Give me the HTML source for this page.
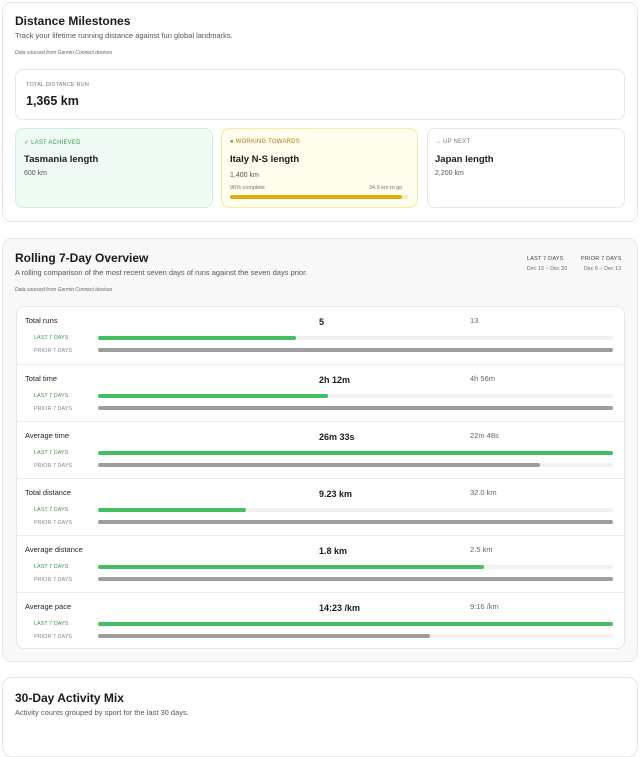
<!DOCTYPE html>
<html><head><meta charset="utf-8"><style>
*{margin:0;padding:0;box-sizing:border-box}
body{width:640px;height:725px;background:#fff;font-family:"Liberation Sans",sans-serif;color:#1a1a1a;position:relative;overflow:hidden}
.a{position:absolute}
.card{position:absolute;border:1px solid #e6e6e6;border-radius:10px}
h2{position:absolute;font-size:12px;font-weight:bold;color:#1a1a1a}
.sub{position:absolute;font-size:7.5px;color:#555}
.src{position:absolute;font-size:5px;font-style:italic;color:#666}
.lab{position:absolute;font-size:5.5px;letter-spacing:.2px;color:#777}
.row{position:absolute;left:16px;width:608px;height:57px;border-top:1px solid #ececec}
.nm{position:absolute;left:9px;top:9px;font-size:7.5px;color:#222}
.v1{position:absolute;left:303px;top:10px;font-size:9px;font-weight:bold}
.v2{position:absolute;left:454px;top:9px;font-size:7.5px;color:#666}
.l1{position:absolute;left:18px;top:28px;font-size:5.5px;color:#3a9a50}
.l2{position:absolute;left:18px;top:41px;font-size:5.5px;color:#888}
.tr{position:absolute;left:82px;width:515px;height:4px;background:#f1f1f1;border-radius:2px}
.g{height:4px;background:#45bd63;border-radius:2px}
.p{height:4px;background:#9e9e9e;border-radius:2px}
</style></head><body>
<div class="card" style="left:2px;top:2px;width:636px;height:220px;background:#fff"></div>
<h2 style="left:15px;top:14px">Distance Milestones</h2>
<div class="sub" style="left:15px;top:31px">Track your lifetime running distance against fun global landmarks.</div>
<div class="src" style="left:15px;top:50px">Data sourced from Garmin Connect devices</div>
<div class="card" style="left:15px;top:69px;width:610px;height:51px;background:#fff;border-radius:8px"></div>
<div class="lab" style="left:26px;top:82px">TOTAL DISTANCE RUN</div>
<div class="a" style="left:26px;top:94px;font-size:12.5px;font-weight:bold">1,365 km</div>
<div class="card" style="left:15px;top:128px;width:198px;height:80px;background:#f1fbf6;border-color:#cdeedd;border-radius:8px"></div>
<div class="lab" style="left:24px;top:139px;color:#3a9a50;font-size:6px">✓ LAST ACHIEVED</div>
<div class="a" style="left:24px;top:154px;font-size:9.5px;font-weight:bold">Tasmania length</div>
<div class="a" style="left:24px;top:170px;font-size:7px;color:#555">600 km</div>
<div class="card" style="left:221px;top:128px;width:197px;height:80px;background:#fffdeb;border-color:#f0e9a8;border-radius:8px"></div>
<div class="lab" style="left:230px;top:139px;color:#a7781a;font-size:6px">● WORKING TOWARDS</div>
<div class="a" style="left:230px;top:154px;font-size:9.5px;font-weight:bold">Italy N-S length</div>
<div class="a" style="left:230px;top:172px;font-size:7px;color:#555">1,400 km</div>
<div class="a" style="left:230px;top:185px;font-size:5.5px;color:#777">96% complete</div>
<div class="a" style="left:369px;top:185px;font-size:5.5px;color:#777">34.9 km to go</div>
<div class="a" style="left:230px;top:195px;width:178px;height:4px;background:#f2edc8;border-radius:2px"><div style="width:172px;height:4px;background:#e0ad0f;border-radius:2px"></div></div>
<div class="card" style="left:427px;top:128px;width:198px;height:80px;background:#fff;border-radius:8px"></div>
<div class="lab" style="left:435px;top:139px;font-size:6px">→ UP NEXT</div>
<div class="a" style="left:435px;top:154px;font-size:9.5px;font-weight:bold">Japan length</div>
<div class="a" style="left:435px;top:170px;font-size:7px;color:#555">2,200 km</div>

<div class="card" style="left:2px;top:238px;width:636px;height:424px;background:#f8f8f8"></div>
<h2 style="left:15px;top:251px">Rolling 7-Day Overview</h2>
<div class="sub" style="left:15px;top:268px">A rolling comparison of the most recent seven days of runs against the seven days prior.</div>
<div class="src" style="left:15px;top:287px">Data sourced from Garmin Connect devices</div>
<div class="lab" style="left:527px;top:256px;color:#444">LAST 7 DAYS</div>
<div class="lab" style="left:527px;top:266px;font-size:5px;color:#666">Dec 13 – Dec 20</div>
<div class="lab" style="left:581px;top:256px;color:#444">PRIOR 7 DAYS</div>
<div class="lab" style="left:584px;top:266px;font-size:5px;color:#666">Dec 6 – Dec 13</div>
<div class="card" style="left:16px;top:306px;width:609px;height:343px;background:#fff;border-radius:8px"></div>

<div class="row" style="top:307px;border-top:none"><div class="nm">Total runs</div><div class="v1">5</div><div class="v2">13</div><div class="l1">LAST 7 DAYS</div><div class="l2">PRIOR 7 DAYS</div><div class="tr" style="top:29px"><div class="g" style="width:198px"></div></div><div class="tr" style="top:41px"><div class="p" style="width:515px"></div></div></div>
<div class="row" style="top:364px"><div class="nm">Total time</div><div class="v1">2h 12m</div><div class="v2">4h 56m</div><div class="l1">LAST 7 DAYS</div><div class="l2">PRIOR 7 DAYS</div><div class="tr" style="top:29px"><div class="g" style="width:230px"></div></div><div class="tr" style="top:41px"><div class="p" style="width:515px"></div></div></div>
<div class="row" style="top:421px"><div class="nm">Average time</div><div class="v1">26m 33s</div><div class="v2">22m 48s</div><div class="l1">LAST 7 DAYS</div><div class="l2">PRIOR 7 DAYS</div><div class="tr" style="top:29px"><div class="g" style="width:515px"></div></div><div class="tr" style="top:41px"><div class="p" style="width:442px"></div></div></div>
<div class="row" style="top:478px"><div class="nm">Total distance</div><div class="v1">9.23 km</div><div class="v2">32.0 km</div><div class="l1">LAST 7 DAYS</div><div class="l2">PRIOR 7 DAYS</div><div class="tr" style="top:29px"><div class="g" style="width:148px"></div></div><div class="tr" style="top:41px"><div class="p" style="width:515px"></div></div></div>
<div class="row" style="top:535px"><div class="nm">Average distance</div><div class="v1">1.8 km</div><div class="v2">2.5 km</div><div class="l1">LAST 7 DAYS</div><div class="l2">PRIOR 7 DAYS</div><div class="tr" style="top:29px"><div class="g" style="width:386px"></div></div><div class="tr" style="top:41px"><div class="p" style="width:515px"></div></div></div>
<div class="row" style="top:592px"><div class="nm">Average pace</div><div class="v1">14:23 /km</div><div class="v2">9:16 /km</div><div class="l1">LAST 7 DAYS</div><div class="l2">PRIOR 7 DAYS</div><div class="tr" style="top:29px"><div class="g" style="width:515px"></div></div><div class="tr" style="top:41px"><div class="p" style="width:332px"></div></div></div>

<div class="card" style="left:2px;top:677px;width:636px;height:80px;background:#fff"></div>
<h2 style="left:15px;top:691px">30-Day Activity Mix</h2>
<div class="sub" style="left:15px;top:708px">Activity counts grouped by sport for the last 30 days.</div>
</body></html>
